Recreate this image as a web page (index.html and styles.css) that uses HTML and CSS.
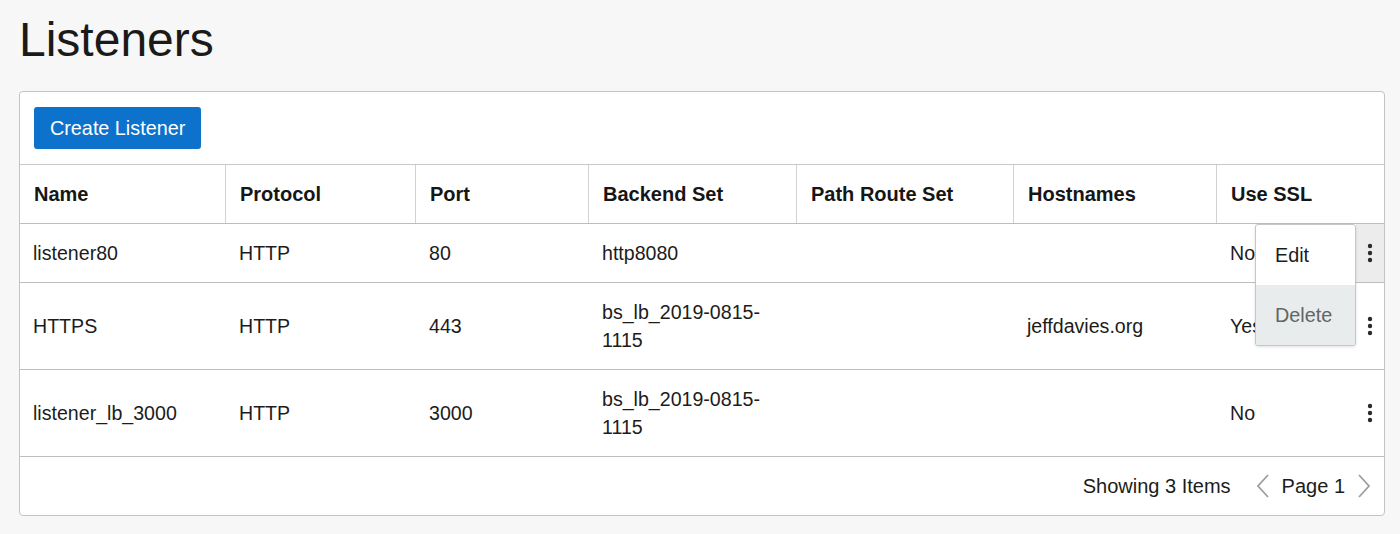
FILE: index.html
```html
<!DOCTYPE html>
<html lang="en">
<head>
<meta charset="utf-8">
<title>Listeners</title>
<link rel="stylesheet" href="styles.css">
</head>
<body>
<main class="page">
  <h1 class="title">Listeners</h1>
  <section class="card">
    <div class="toolbar">
      <button class="btn-primary" type="button">Create Listener</button>
    </div>
    <div class="grid">
      <div class="row head">
        <div class="th">Name</div>
        <div class="th">Protocol</div>
        <div class="th">Port</div>
        <div class="th">Backend Set</div>
        <div class="th">Path Route Set</div>
        <div class="th">Hostnames</div>
        <div class="th th-last">Use SSL</div>
      </div>
      <div class="row body single">
        <div class="td">listener80</div>
        <div class="td">HTTP</div>
        <div class="td">80</div>
        <div class="td">http8080</div>
        <div class="td"></div>
        <div class="td"></div>
        <div class="td">No</div>
        <div class="td kebab-cell active">
          <svg class="kebab" width="6" height="20" viewBox="0 0 6 20"><circle cx="3" cy="3" r="2.2"/><circle cx="3" cy="10" r="2.2"/><circle cx="3" cy="17" r="2.2"/></svg>
          <ul class="menu">
            <li class="menu-item">Edit</li>
            <li class="menu-item selected">Delete</li>
          </ul>
        </div>
      </div>
      <div class="row body">
        <div class="td">HTTPS</div>
        <div class="td">HTTP</div>
        <div class="td">443</div>
        <div class="td">bs_lb_2019-0815-<br>1115</div>
        <div class="td"></div>
        <div class="td">jeffdavies.org</div>
        <div class="td">Yes</div>
        <div class="td kebab-cell">
          <svg class="kebab" width="6" height="20" viewBox="0 0 6 20"><circle cx="3" cy="3" r="2.2"/><circle cx="3" cy="10" r="2.2"/><circle cx="3" cy="17" r="2.2"/></svg>
        </div>
      </div>
      <div class="row body">
        <div class="td">listener_lb_3000</div>
        <div class="td">HTTP</div>
        <div class="td">3000</div>
        <div class="td">bs_lb_2019-0815-<br>1115</div>
        <div class="td"></div>
        <div class="td"></div>
        <div class="td">No</div>
        <div class="td kebab-cell">
          <svg class="kebab" width="6" height="20" viewBox="0 0 6 20"><circle cx="3" cy="3" r="2.2"/><circle cx="3" cy="10" r="2.2"/><circle cx="3" cy="17" r="2.2"/></svg>
        </div>
      </div>
    </div>
    <div class="footer">
      <span class="count">Showing 3 Items</span>
      <svg class="chev" width="16" height="26" viewBox="0 0 16 26"><polyline points="13,2 3,13 13,24"/></svg>
      <span class="page-label">Page 1</span>
      <svg class="chev" width="16" height="26" viewBox="0 0 16 26"><polyline points="3,2 13,13 3,24"/></svg>
    </div>
  </section>
</main>
</body>
</html>
```
FILE: styles.css
```css
* { box-sizing: border-box; }

html, body {
  margin: 0;
  padding: 0;
  background: #f7f7f7;
}

body {
  font-family: "Liberation Sans", Arial, Helvetica, sans-serif;
  color: #1c1c1c;
}

.page {
  padding: 12px 15px 0 19px;
}

.title {
  margin: 0;
  font-size: 48px;
  line-height: 56px;
  font-weight: 400;
  color: #1a1a1a;
}

.card {
  margin-top: 23px;
  background: #fff;
  border: 1px solid #c4c4c4;
  border-radius: 4px;
  width: 1366px;
}

.toolbar {
  padding: 15px 14px;
  border-bottom: 1px solid #c9c9c9;
}

.btn-primary {
  height: 42px;
  padding: 0 16px;
  border: none;
  border-radius: 3px;
  background: #0c72cc;
  color: #fff;
  font-family: inherit;
  font-size: 19.8px;
  cursor: pointer;
}

.row {
  display: grid;
  grid-template-columns: 206px 190px 173px 208px 217px 203px 139px 1fr;
  border-bottom: 1px solid #bdbdbd;
}

.head {
  height: 59px;
  grid-template-columns: 206px 190px 173px 208px 217px 203px 1fr;
}

.th {
  display: flex;
  align-items: center;
  padding-left: 14px;
  font-size: 20px;
  font-weight: 700;
  color: #161616;
  border-right: 1px solid #d2d2d2;
}

.th-last { border-right: none; }

.body {
  height: 87px;
}

.body.single { height: 59px; }

.td {
  display: flex;
  align-items: center;
  padding-left: 13px;
  font-size: 19.6px;
  line-height: 28px;
  color: #1c1c1c;
}

.kebab-cell {
  position: relative;
  padding-left: 0;
  justify-content: center;
}

.kebab-cell.active { background: #ececec; }

.kebab { fill: #2a2a2a; }

.menu {
  position: absolute;
  top: 0;
  right: 100%;
  width: 101px;
  margin: 0;
  padding: 0;
  list-style: none;
  background: #fff;
  border: 1px solid #c6c6c6;
  border-radius: 3px;
  box-shadow: 0 1px 3px rgba(0, 0, 0, 0.12);
  overflow: hidden;
  z-index: 2;
}

.menu-item {
  height: 60px;
  display: flex;
  align-items: center;
  padding-left: 19px;
  font-size: 19.8px;
  color: #1c1c1c;
}

.menu-item.selected {
  background: #e9ecec;
  color: #646464;
}

.footer {
  height: 58px;
  display: flex;
  align-items: center;
  justify-content: flex-end;
  padding-right: 12px;
  font-size: 20px;
  color: #1c1c1c;
}

.count { margin-right: 24px; }

.page-label { margin: 0 11px; }

.chev {
  fill: none;
  stroke: #9e9e9e;
  stroke-width: 1.8;
}
```
